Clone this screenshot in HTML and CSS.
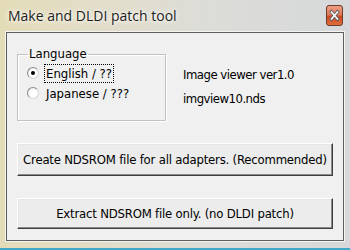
FILE: index.html
```html
<!DOCTYPE html>
<html>
<head>
  <meta charset="UTF-8" />
  <title>Make and DLDI patch tool</title>
  <link rel="stylesheet" href="styles.css">
</head>
<body>
  <div class="window">
    <div class="titlebar">
      <span class="title">Make and DLDI patch tool</span>
      <span class="close">
        <svg viewBox="0 0 17 21" width="17" height="21">
          <defs>
            <linearGradient id="cg" x1="0" y1="0" x2="0" y2="1">
              <stop offset="0" stop-color="#f0a088"/>
              <stop offset="0.45" stop-color="#e07a5c"/>
              <stop offset="0.55" stop-color="#cc4a26"/>
              <stop offset="1" stop-color="#e0703e"/>
            </linearGradient>
          </defs>
          <rect x="0.5" y="0.5" width="16" height="20" rx="2.5" fill="url(#cg)" stroke="#6b3b2e"/>
          <path d="M5.5 7 L11.5 14 M11.5 7 L5.5 14" stroke="#555" stroke-width="3.4" stroke-linecap="square"/>
          <path d="M5.5 7 L11.5 14 M11.5 7 L5.5 14" stroke="#f4f4f4" stroke-width="1.8" stroke-linecap="square"/>
        </svg>
      </span>
    </div>
    <div class="client">
      <div class="top">
        <fieldset class="group">
          <legend>Language</legend>
          <label class="radio">
            <span class="dot checked"></span>
            <span class="focus">English / ??</span>
          </label>
          <label class="radio">
            <span class="dot"></span>
            <span class="plain">Japanese / ???</span>
          </label>
        </fieldset>
        <div class="info">
          <div>Image viewer ver1.0</div>
          <div>imgview10.nds</div>
        </div>
      </div>
      <button class="btn">Create NDSROM file for all adapters. (Recommended)</button>
      <button class="btn">Extract NDSROM file only. (no DLDI patch)</button>
    </div>
  </div>
</body>
</html>
```

FILE: styles.css
```css
* {
  box-sizing: border-box;
}
body {
  margin: 0;
  width: 350px;
  height: 250px;
  overflow: hidden;
  font-family: "Liberation Sans Narrow", "DejaVu Sans Condensed", "Liberation Sans", sans-serif;
  font-size: 13px;
  color: #000;
}
.window {
  width: 350px;
  height: 250px;
  padding: 0 6px;
  background: linear-gradient(90deg, #e4dcb8 0%, #e2ddca 30%, #dcdcd8 60%, #d6d8da 100%);
  border-bottom: 2px solid #3fa8c8;
  display: flex;
  flex-direction: column;
}
.titlebar {
  height: 32px;
  display: flex;
  align-items: center;
  justify-content: space-between;
  padding: 0 2px 2px 2px;
}
.title {
  font-family: "Open Sans", "Noto Sans", sans-serif;
  font-size: 14px;
  color: #1c1c1c;
  text-shadow: 0 0 6px #fff, 0 0 3px #fff;
}
.close {
  display: flex;
  margin-right: -1px;
}
.client {
  height: 209px;
  background: #f0f0f0;
  border: 1px solid #5e5e5e;
  box-shadow: 0 0 0 1px #f4f4f0;
  padding: 14px 10px 0 10px;
  display: flex;
  flex-direction: column;
}
.top {
  display: flex;
  align-items: flex-start;
  height: 74px;
}
.group {
  width: 149px;
  height: 74px;
  margin: 0;
  padding: 2px 0 0 9px;
  border: 1px solid #c2c2c2;
  box-shadow: inset 1px 1px 0 #fff, 1px 1px 0 #fff;
}
.group legend {
  padding: 0 1px;
  margin-left: 1px;
  line-height: 14px;
}
.radio {
  display: flex;
  align-items: center;
  height: 20px;
}
.dot {
  width: 12px;
  height: 12px;
  border-radius: 50%;
  background: radial-gradient(circle at 60% 60%, #fff 40%, #e2e2e2 100%);
  border: 1px solid;
  border-color: #8a8a8a #d8d8d8 #d8d8d8 #8a8a8a;
  margin-right: 6px;
  position: relative;
}
.dot.checked::after {
  content: "";
  position: absolute;
  left: 3px;
  top: 3px;
  width: 4px;
  height: 4px;
  border-radius: 50%;
  background: #000;
}
.focus {
  outline: 1px dotted #000;
  padding: 1px 1px;
}
.plain {
  padding: 1px 1px;
}
.info {
  margin-left: 17px;
  padding-top: 16px;
  line-height: 24px;
  letter-spacing: -0.5px;
}
.btn {
  font: inherit;
  letter-spacing: -0.2px;
  color: #000;
  height: 33px;
  margin-top: 22px;
  background: #ececec;
  border: 1px solid;
  border-color: #fff #404040 #404040 #fff;
  box-shadow: inset -1px -1px 0 #8a8a8a, inset 1px 1px 0 #e6e6e6;
  padding: 0;
}
.btn + .btn {
  height: 31px;
}
```
